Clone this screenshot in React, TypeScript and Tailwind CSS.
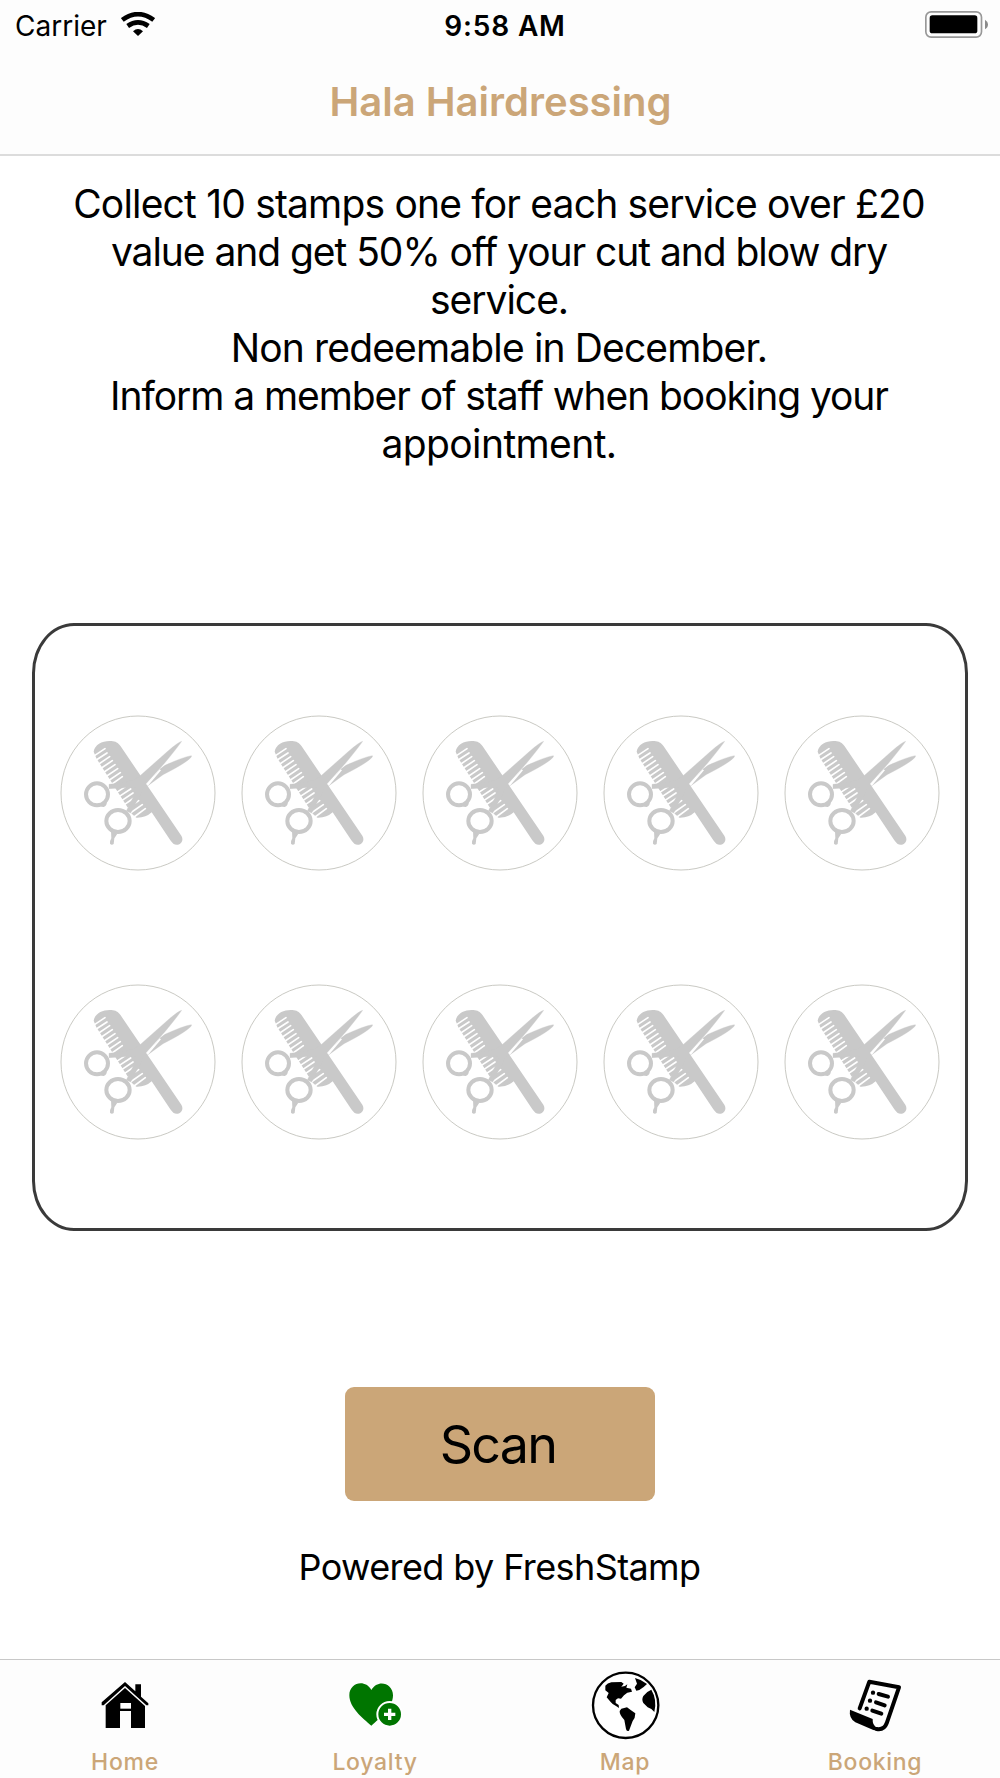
import type { ReactNode } from 'react';
import clsx from 'clsx';

const description = [
  { text: 'Collect 10 stamps one for each service over £20', tracking: 'tracking-[-0.82px]' },
  { text: 'value and get 50% off your cut and blow dry', tracking: 'tracking-[-1.05px]' },
  { text: 'service.', tracking: 'tracking-[-1px]' },
  { text: 'Non redeemable in December.', tracking: 'tracking-[-0.86px]' },
  { text: 'Inform a member of staff when booking your', tracking: 'tracking-[-1.07px]' },
  { text: 'appointment.', tracking: 'tracking-[-0.6px]' },
];

const STAMP_COUNT = 10;

function WifiIcon() {
  return (
    <svg className="mb-[2px] h-6 w-[34px]" viewBox="0 0 102 72" fill="none" stroke="#000">
      <path d="M4 24 Q51 -11 98 24" strokeWidth="14" />
      <path d="M20 42 Q51 20 82 42" strokeWidth="14" />
      <path d="M36 58 Q51 44 66 58 L51 72Z" fill="#000" stroke="none" />
    </svg>
  );
}

function BatteryIcon() {
  return (
    <svg className="mb-px h-[27px] w-[63px]" viewBox="0 0 189 81">
      <rect x="2.5" y="2.5" width="167" height="76" rx="16" fill="none" stroke="#989898" strokeWidth="5" />
      <rect x="14" y="13" width="143" height="54" rx="8" fill="#000" />
      <path d="M180 26 Q189 32 189 40 Q189 50 180 55Z" fill="#8a8a8a" />
    </svg>
  );
}

function Stamp() {
  return (
    <svg className="h-[156px] w-[156px]" viewBox="31 30 468 468">
      <circle cx="265" cy="264" r="231" fill="none" stroke="#b9b9b0" strokeWidth="2.3" />
      {/* comb */}
      <path
        d="M132 140 C135 118 160 106 185 108 C198 109 205 113 213 124 L395 392 C406 410 386 426 371 416 Q366 412 362 406 L306 322 Q288 339 260 338 L246 326 L140 160Z"
        fill="#c9c9c9"
      />
      <path
        d="M130 155 L166 131 M135 168 L172 144 M143 180 L180 155 M151 192 L188 167 M159 204 L196 179 M167 216 L204 191 M175 228 L212 203 M183 240 L218 215 M200 263 L232 242 M208 275 L243 252 M216 287 L250 264 M224 299 L257 276 M233 311 L267 287 M242 324 L278 299 M253 336 L287 311"
        stroke="#fff"
        strokeWidth="5"
        strokeLinecap="round"
      />
      {/* scissors */}
      <g fill="#c9c9c9" stroke="#c9c9c9" strokeLinejoin="round">
        <path d="M396 109 Q385 112 355 138 L267 216 Q240 234 178 238 L178 251 L256 246 L264 250 L230 318 L243 324 L289 236 L345 174 Q383 128 396 109Z" strokeWidth="1" />
        <path d="M425 152 Q400 156 346 181 L330 193 L292 244 Q300 238 340 209 Q410 174 425 156Z" strokeWidth="1" />
      </g>
      <path d="M293 241 L332 194" stroke="#fff" strokeWidth="5" />
      <circle cx="142" cy="268" r="33" fill="none" stroke="#c9c9c9" strokeWidth="12" />
      <ellipse cx="205" cy="348" rx="35" ry="33" fill="none" stroke="#c9c9c9" strokeWidth="12" />
      <path d="M150 300 L171 292 Q172 303 162 306 Q154 307 150 300Z M184 376 L203 386 L194 400 L192 417 Q186 422 181 416 Q179 410 185 400Z" fill="#c9c9c9" />
    </svg>
  );
}

function HomeIcon() {
  return (
    <svg className="ml-[10px] h-[78px] w-[100px]" viewBox="0 0 300 234">
      <path d="M135 51 L166 79 V58 H183 V95 L205 115 V121 H199 L135 63 L71 121 H65 V112Z" fill="#000" />
      <path d="M135 69 L195 123 V189 H153 V138 H120 V189 H77 V121Z" fill="#000" />
      <path d="M121 114 H153 V131 H121Z" fill="#fff" />
    </svg>
  );
}

function LoyaltyIcon() {
  return (
    <svg className="h-[78px] w-[110px]" viewBox="0 0 330 234">
      <path
        d="M154 182 C128 160 88 128 88 91 C88 53 135 41 154 75 C173 41 219 54 219 91 C219 128 180 160 154 182Z"
        fill="#007500"
      />
      <circle cx="209" cy="148" r="37" fill="#007500" stroke="#fff" strokeWidth="6" />
      <path d="M209 131 V165 M192 148 H226" stroke="#fff" strokeWidth="10" />
    </svg>
  );
}

function MapIcon() {
  return (
    <svg className="ml-[5px] h-[83px] w-[95px]" viewBox="0 0 285 249">
      <circle cx="137" cy="136" r="98" fill="#fff" stroke="#000" strokeWidth="7" />
      <path
        d="M76 77 Q82 69 94 67 L124 66 L131 71 L124 80 L135 78 L142 73 L139 83 L153 86 L156 95 L142 98 L132 106 L123 116 L114 115 L107 120 L107 129 L116 135 L117 144 L108 138 Q97 133 92 126 L80 112 L86 99 L76 91Z"
        fill="#000"
      />
      <path d="M124 146 L141 142 L153 151 L166 160 Q166 174 158 183 L147 212 Q140 216 138 207 L133 180 Q118 164 119 153Z" fill="#000" />
      <path d="M165 54 Q186 59 201 72 L191 81 L178 90 L169 92 L164 82 L171 71Z" fill="#000" />
      <path d="M214 89 Q232 119 223 156 L214 147 L203 142 L190 129 Q184 119 190 108 L202 96Z" fill="#000" />
    </svg>
  );
}

function BookingIcon() {
  return (
    <svg className="h-[83px] w-[110px]" viewBox="0 0 330 249">
      <path d="M119 145 L148 65 L237 82 L200 190 Q192 211 170 207" fill="none" stroke="#000" strokeWidth="12" strokeLinecap="round" strokeLinejoin="round" />
      <path d="M90 149 L158 177 Q157 197 171 203 L172 212 L160 210 L106 187 Q86 174 90 149Z" fill="#000" />
      <path d="M176 102 L204 110 M168 127 L194 136 M157 152 L184 161" stroke="#000" strokeWidth="12" strokeLinecap="round" />
      <circle cx="159" cy="98" r="6.5" />
      <circle cx="150" cy="122" r="6.5" />
      <circle cx="140" cy="146" r="6.5" />
    </svg>
  );
}

function Tab({ label, icon }: { label: string; icon: ReactNode }) {
  return (
    <button className="flex flex-1 flex-col items-center">
      <div className="flex h-[83px] items-end">{icon}</div>
      <span className="mt-[3px] text-[23px] leading-8 font-medium tracking-[0.7px] text-[#cba678]">{label}</span>
    </button>
  );
}

export default function App() {
  return (
    <div className="flex h-[1778px] w-[1000px] flex-col overflow-hidden bg-white font-['Inter',sans-serif] text-black">
      <header className="h-[156px] shrink-0 border-b-2 border-[#dcdcdc] bg-[#fdfdfd]">
        {/* Status bar */}
        <div className="grid h-[50px] grid-cols-3 items-center pr-3 pl-[15px]">
          <div className="flex items-center gap-[14px]">
            <span className="pt-px text-[28px]">Carrier</span>
            <WifiIcon />
          </div>
          <span className="pt-px pl-[7px] text-center text-[28px] font-semibold tracking-[0.85px]">9:58 AM</span>
          <div className="flex justify-end">
            <BatteryIcon />
          </div>
        </div>
        <h1 className="mt-[22px] pl-px text-center text-[40px] leading-[60px] font-semibold text-[#cba678]">Hala Hairdressing</h1>
      </header>

      <main className="flex flex-1 flex-col items-center">
        <div className="mt-6 pr-[2px] text-center text-[39px] leading-[48px]">
          {description.map((line) => (
            <p key={line.text} className={clsx('whitespace-nowrap', line.tracking)}>
              {line.text}
            </p>
          ))}
        </div>

        <section className="mt-[155px] h-[608px] w-[936px] rounded-[42px/50px] border-[3px] border-[#3a3a3a]">
          <div className="mt-[89px] ml-[25px] grid grid-cols-[repeat(5,181px)] gap-y-[113px]">
            {Array.from({ length: STAMP_COUNT }, (_, i) => (
              <Stamp key={i} />
            ))}
          </div>
        </section>

        <button className="mt-[156px] h-[114px] w-[310px] rounded-[9px] bg-[#cba678] pt-px pr-[4px] text-[52px] tracking-[-1.7px]">
          Scan
        </button>
        <p className="mt-[42px] pr-px text-[36px] leading-[48px] tracking-[-0.6px]">Powered by FreshStamp</p>
      </main>

      <nav className="flex h-[119px] shrink-0 border-t border-[#c8c8c8] bg-[#fdfdfd]">
        <Tab label="Home" icon={<HomeIcon />} />
        <Tab label="Loyalty" icon={<LoyaltyIcon />} />
        <Tab label="Map" icon={<MapIcon />} />
        <Tab label="Booking" icon={<BookingIcon />} />
      </nav>
    </div>
  );
}
